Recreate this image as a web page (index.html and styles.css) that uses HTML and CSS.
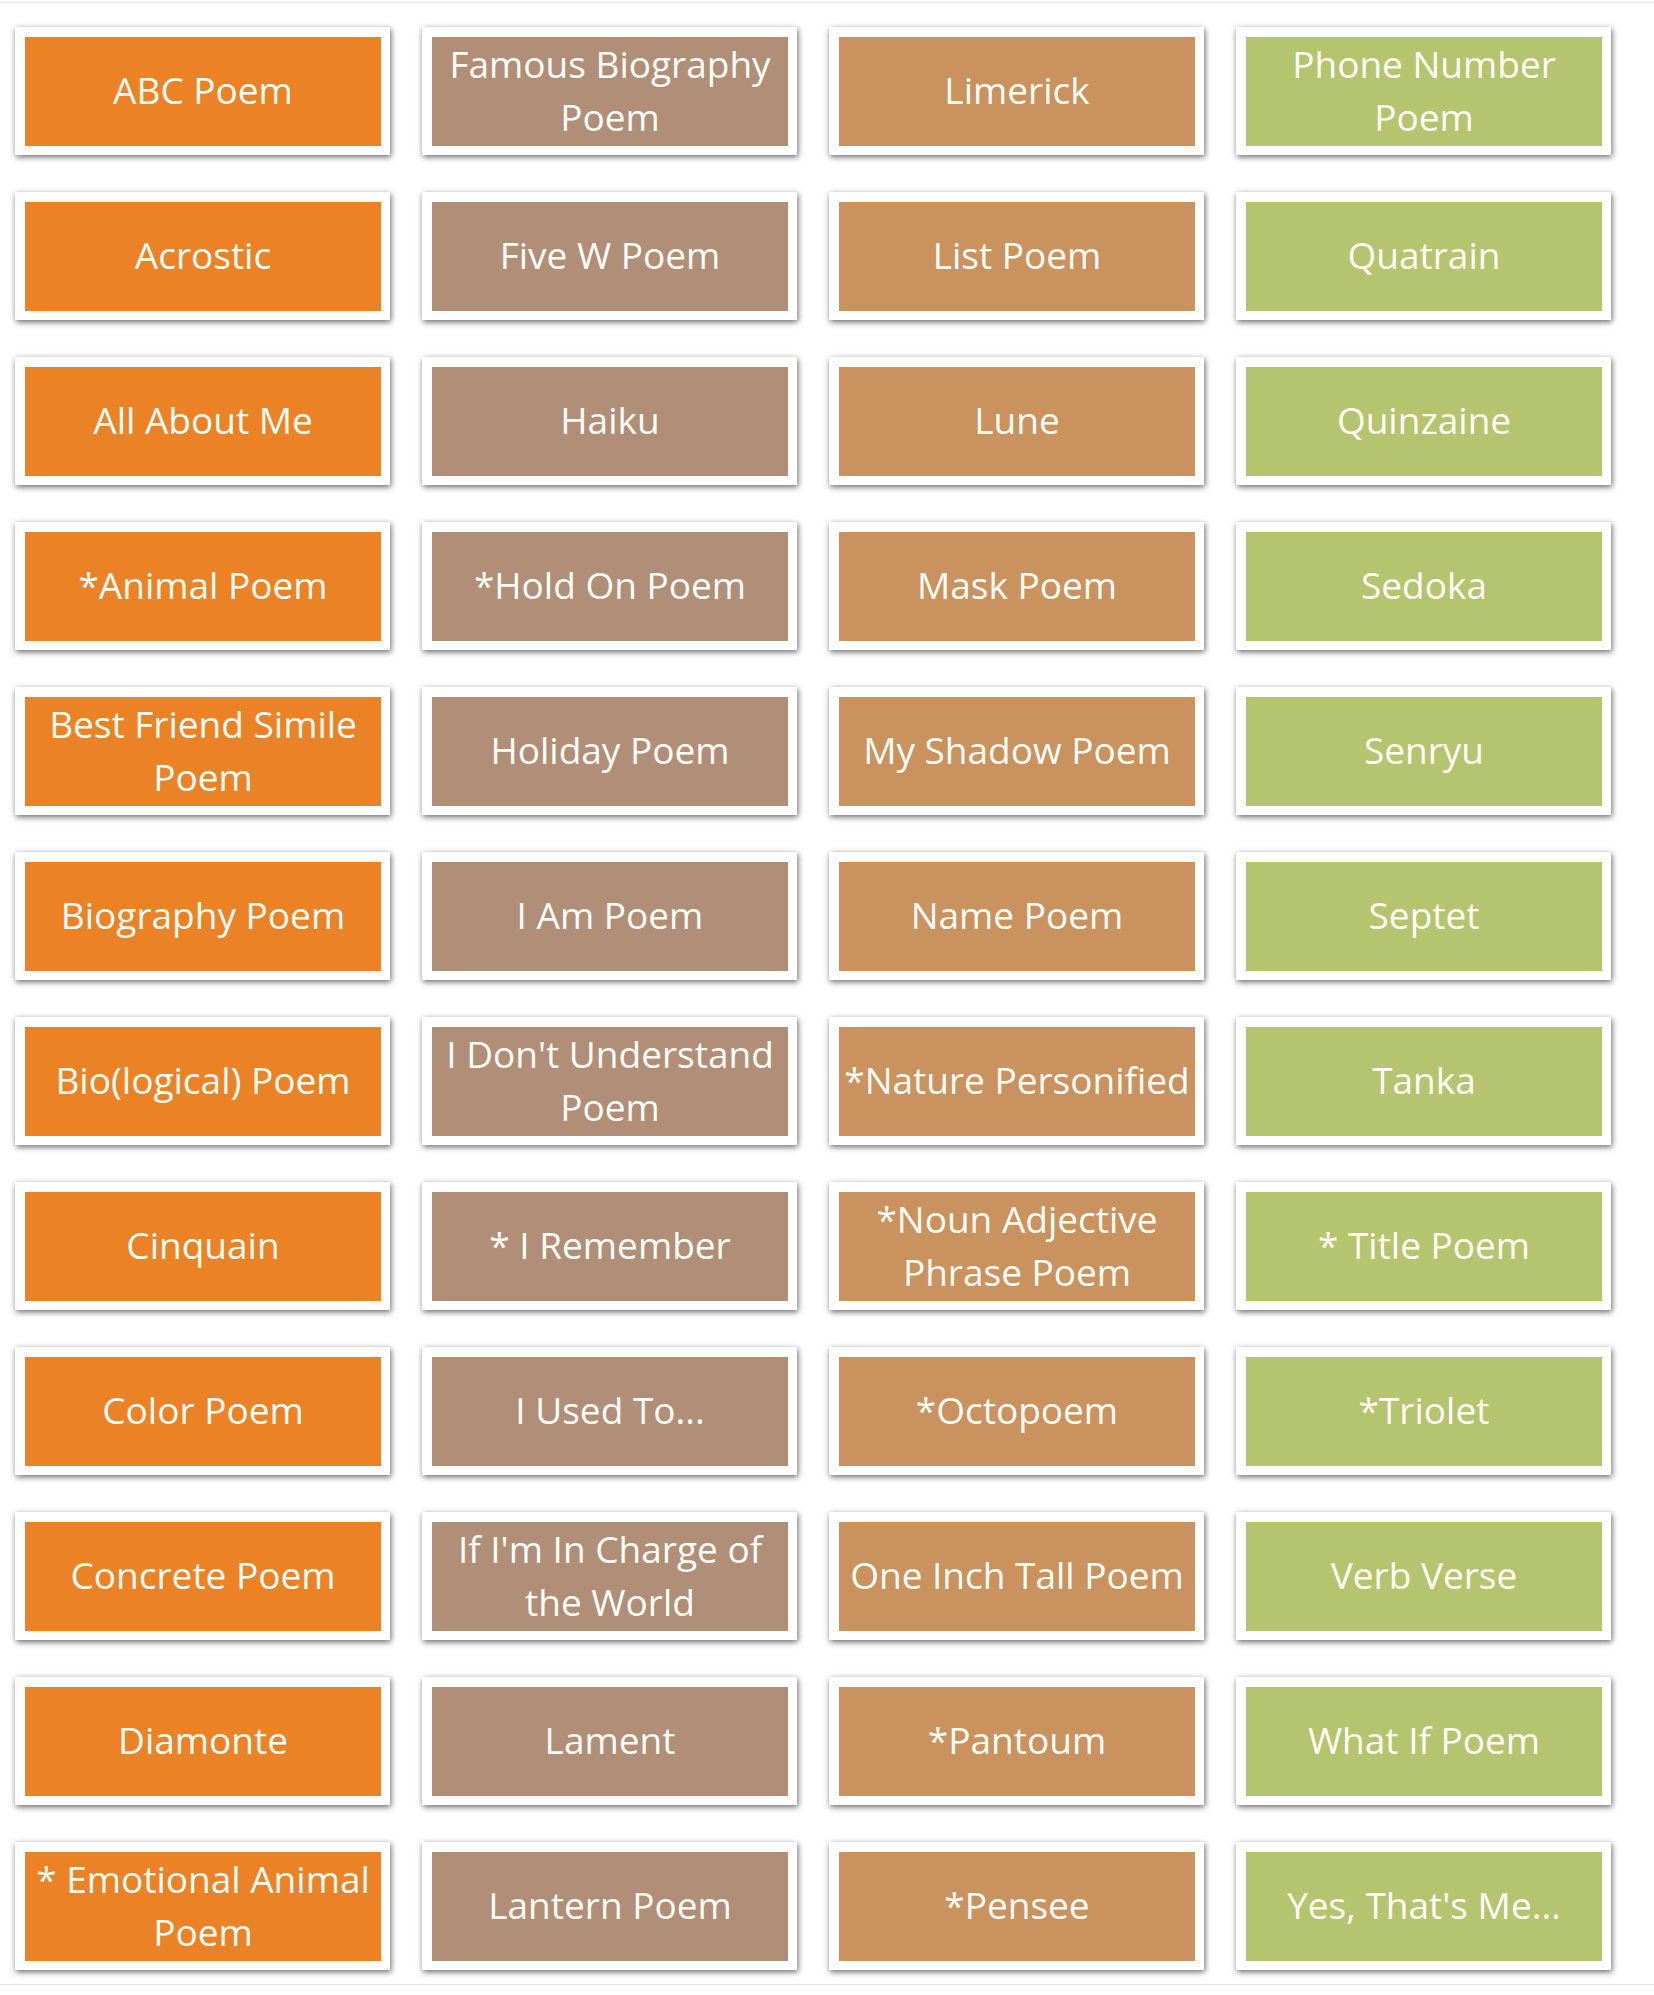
FILE: index.html
```html
<!DOCTYPE html>
<html lang="en">
<head>
<meta charset="utf-8">
<title>Poem Types</title>
<link rel="stylesheet" href="styles.css">
</head>
<body>
<div class="page">
  <div class="grid">
    <div class="card"><div class="tile orange">ABC Poem</div></div>
    <div class="card"><div class="tile orange">Acrostic</div></div>
    <div class="card"><div class="tile orange">All About Me</div></div>
    <div class="card"><div class="tile orange">*Animal Poem</div></div>
    <div class="card"><div class="tile orange">Best Friend Simile Poem</div></div>
    <div class="card"><div class="tile orange">Biography Poem</div></div>
    <div class="card"><div class="tile orange">Bio(logical) Poem</div></div>
    <div class="card"><div class="tile orange">Cinquain</div></div>
    <div class="card"><div class="tile orange">Color Poem</div></div>
    <div class="card"><div class="tile orange">Concrete Poem</div></div>
    <div class="card"><div class="tile orange">Diamonte</div></div>
    <div class="card"><div class="tile orange">* Emotional Animal Poem</div></div>

    <div class="card"><div class="tile brown">Famous Biography Poem</div></div>
    <div class="card"><div class="tile brown">Five W Poem</div></div>
    <div class="card"><div class="tile brown">Haiku</div></div>
    <div class="card"><div class="tile brown">*Hold On Poem</div></div>
    <div class="card"><div class="tile brown">Holiday Poem</div></div>
    <div class="card"><div class="tile brown">I Am Poem</div></div>
    <div class="card"><div class="tile brown">I Don't Understand Poem</div></div>
    <div class="card"><div class="tile brown">* I Remember</div></div>
    <div class="card"><div class="tile brown">I Used To...</div></div>
    <div class="card"><div class="tile brown">If I'm In Charge of the World</div></div>
    <div class="card"><div class="tile brown">Lament</div></div>
    <div class="card"><div class="tile brown">Lantern Poem</div></div>

    <div class="card"><div class="tile tan">Limerick</div></div>
    <div class="card"><div class="tile tan">List Poem</div></div>
    <div class="card"><div class="tile tan">Lune</div></div>
    <div class="card"><div class="tile tan">Mask Poem</div></div>
    <div class="card"><div class="tile tan">My Shadow Poem</div></div>
    <div class="card"><div class="tile tan">Name Poem</div></div>
    <div class="card"><div class="tile tan">*Nature Personified</div></div>
    <div class="card"><div class="tile tan">*Noun Adjective Phrase Poem</div></div>
    <div class="card"><div class="tile tan">*Octopoem</div></div>
    <div class="card"><div class="tile tan">One Inch Tall Poem</div></div>
    <div class="card"><div class="tile tan">*Pantoum</div></div>
    <div class="card"><div class="tile tan">*Pensee</div></div>

    <div class="card"><div class="tile green">Phone Number Poem</div></div>
    <div class="card"><div class="tile green">Quatrain</div></div>
    <div class="card"><div class="tile green">Quinzaine</div></div>
    <div class="card"><div class="tile green">Sedoka</div></div>
    <div class="card"><div class="tile green">Senryu</div></div>
    <div class="card"><div class="tile green">Septet</div></div>
    <div class="card"><div class="tile green">Tanka</div></div>
    <div class="card"><div class="tile green">* Title Poem</div></div>
    <div class="card"><div class="tile green">*Triolet</div></div>
    <div class="card"><div class="tile green">Verb Verse</div></div>
    <div class="card"><div class="tile green">What If Poem</div></div>
    <div class="card"><div class="tile green">Yes, That's Me...</div></div>
  </div>
</div>
</body>
</html>
```

FILE: styles.css
```css
html, body {
  margin: 0;
  padding: 0;
  background: #ffffff;
}

body {
  font-family: "Open Sans", "Noto Sans", sans-serif;
}

.page {
  margin-top: 2px;
  border-top: 1px solid #e4e4e4;
  border-bottom: 1px solid #e4e4e4;
  padding: 24px 0 14px 15px;
}

.grid {
  display: grid;
  grid-template-columns: repeat(4, 375px);
  grid-template-rows: repeat(12, 128px);
  grid-auto-flow: column;
  column-gap: 32px;
  row-gap: 37px;
}

.card {
  background: #ffffff;
  padding: 10px 9px 9px 10px;
  box-shadow: 1px 2px 6px rgba(0, 0, 0, 0.6);
  display: flex;
}

.tile {
  flex: 1;
  display: flex;
  align-items: center;
  justify-content: center;
  text-align: center;
  color: #fffdf6;
  font-size: 37px;
  line-height: 53px;
  padding: 0 1px 4px;
}

.orange { background: #eb8226; }
.brown  { background: #b08e77; }
.tan    { background: #c9925e; }
.green  { background: #b5c46e; }
```
